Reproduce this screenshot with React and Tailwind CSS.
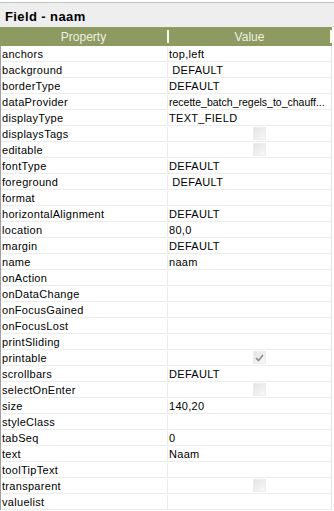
import React from 'react';

const rows = [
  ['anchors', 'top,left'],
  ['background', ' DEFAULT'],
  ['borderType', 'DEFAULT'],
  ['dataProvider', 'recette_batch_regels_to_chauff...'],
  ['displayType', 'TEXT_FIELD'],
  ['displaysTags', 'box'],
  ['editable', 'box'],
  ['fontType', 'DEFAULT'],
  ['foreground', ' DEFAULT'],
  ['format', ''],
  ['horizontalAlignment', 'DEFAULT'],
  ['location', '80,0'],
  ['margin', 'DEFAULT'],
  ['name', 'naam'],
  ['onAction', ''],
  ['onDataChange', ''],
  ['onFocusGained', ''],
  ['onFocusLost', ''],
  ['printSliding', ''],
  ['printable', 'checked'],
  ['scrollbars', 'DEFAULT'],
  ['selectOnEnter', 'box'],
  ['size', '140,20'],
  ['styleClass', ''],
  ['tabSeq', '0'],
  ['text', 'Naam'],
  ['toolTipText', ''],
  ['transparent', 'box'],
  ['valuelist', ''],
];

const Box = ({ checked }) => (
  <div className="w-[13px] h-[13px] bg-gradient-to-br from-[#e4e4e4] to-[#f8f8f8] border border-[#ececec] flex items-center justify-center">
    {checked && (
      <svg width="9" height="8" viewBox="0 0 9 8">
        <path d="M1 4 L3.5 6.5 L8 1" fill="none" stroke="#8a8f80" strokeWidth="1.6" />
      </svg>
    )}
  </div>
);

const App = () => {
  return (
    <div className="w-[334px] h-[511px] bg-white overflow-hidden text-black" style={{ fontFamily: '"Liberation Sans", Arial, sans-serif' }}>
      <div className="h-[2px] bg-white" />
      <div className="h-[25px] bg-[#eeeeee] border-t border-[#c4c4c4] flex items-center pl-[5px] pt-[4px]">
        <span className="text-[13px] font-bold tracking-[0.4px]">Field - naam</span>
      </div>
      <div className="flex h-[19px] bg-[#8d9a62] text-[12px] text-[#eef0e0] w-[332px]">
        <div className="w-[167px] flex items-center justify-center">Property</div>
        <div className="w-[2px] my-[3px] bg-[#fafbe6]" />
        <div className="flex-1 flex items-center justify-center">Value</div>
        <div className="w-[2px] my-[3px] bg-[#fafbe6]" />
      </div>
      <div className="w-[332px] border-l border-[#a0a0a0] border-r border-r-[#e4e4e4]">
        {rows.map(([k, v]) => (
          <div key={k} className="flex h-[16px] border-b border-[#ececec] text-[11px] tracking-[0.3px] leading-[15px] pt-[1px]">
            <div className="w-[167px] pl-[1px] border-r border-[#ececec] whitespace-pre">{k}</div>
            <div className={`flex-1 pl-[1px] whitespace-pre overflow-hidden ${k === 'dataProvider' ? 'tracking-[0px] text-[10.5px]' : ''}`}>
              {v === 'box' || v === 'checked' ? (
                <div className="flex justify-center pl-[18px]">
                  <Box checked={v === 'checked'} />
                </div>
              ) : (
                v
              )}
            </div>
          </div>
        ))}
      </div>
    </div>
  );
};

export default App;
